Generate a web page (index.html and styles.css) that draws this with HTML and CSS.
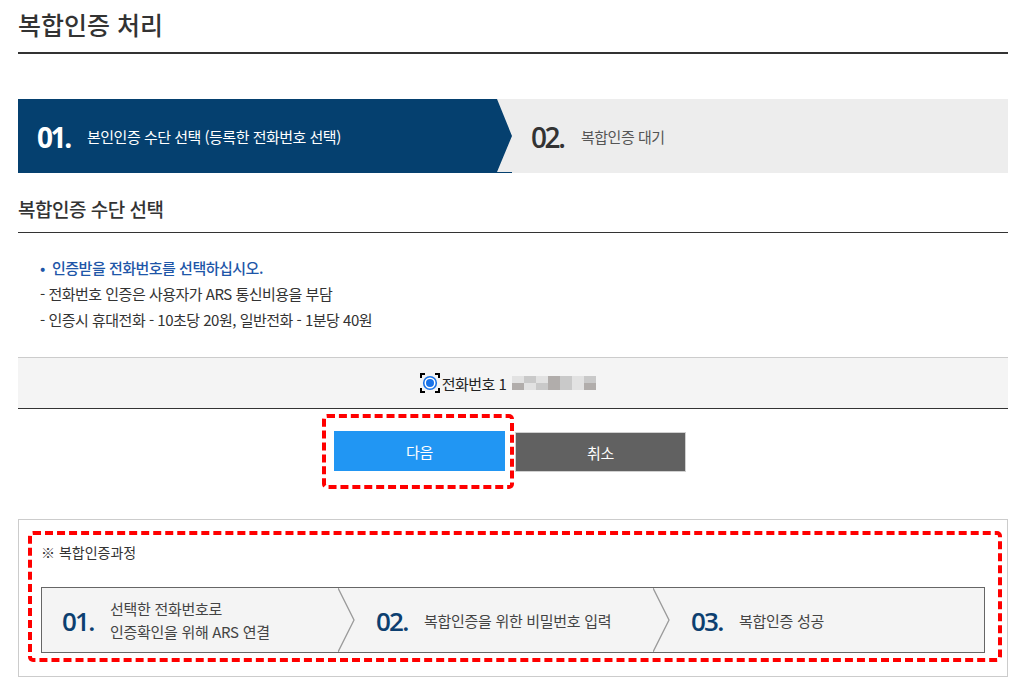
FILE: index.html
```html
<!DOCTYPE html>
<html lang="ko">
<head>
<meta charset="utf-8">
<title>복합인증 처리</title>
<link rel="stylesheet" href="styles.css">
</head>
<body>
<div class="page">
  <h1 class="title">복합인증 처리</h1>

  <div class="steps">
    <div class="step step-on"><span class="step-no">01.</span><span class="step-txt">본인인증 수단 선택 (등록한 전화번호 선택)</span></div>
    <div class="step step-off"><span class="step-no">02.</span><span class="step-txt">복합인증 대기</span></div>
  </div>

  <h2 class="sec">복합인증 수단 선택</h2>

  <ul class="info">
    <li class="info-main"><span class="dot">•</span>인증받을 전화번호를 선택하십시오.</li>
    <li>- 전화번호 인증은 사용자가 ARS 통신비용을 부담</li>
    <li>- 인증시 휴대전화 - 10초당 20원, 일반전화 - 1분당 40원</li>
  </ul>

  <div class="choice">
    <label class="choice-item">
      <svg class="radio" width="20" height="20" viewBox="0 0 20 20">
        <path d="M1 5V1H5M15 1H19V5M19 15V19H15M5 19H1V15" fill="none" stroke="#000" stroke-width="2"/>
        <circle cx="10" cy="10" r="6.3" fill="#fff" stroke="#1a73e8" stroke-width="1.6"/>
        <circle cx="10" cy="10" r="4" fill="#1a73e8"/>
      </svg>
      <span class="choice-txt">전화번호 1</span>
      <span class="mosaic"><i class="m1"></i><i class="m2"></i><i class="m1"></i><i class="m3"></i><i class="m2"></i><i class="m1"></i><i class="m2"></i><i class="m3"></i><i class="m1"></i><i class="m2"></i><i class="m3"></i><i class="m2"></i><i class="m1"></i><i class="m3"></i></span>
    </label>
  </div>

  <div class="btns">
    <span class="mark"><button class="btn btn-next">다음</button></span>
    <button class="btn btn-cancel">취소</button>
  </div>

  <div class="process">
    <p class="proc-label">※ 복합인증과정</p>
    <div class="proc-row">
      <div class="proc-item proc-1"><span class="proc-no">01.</span><span class="proc-txt">선택한 전화번호로<br>인증확인을 위해 ARS 연결</span></div>
      <svg class="chev" width="17" height="64" viewBox="0 0 17 64"><polyline points="0,0 16,32 0,64" fill="none" stroke="#9a9a9a" stroke-width="1.3"/></svg>
      <div class="proc-item proc-2"><span class="proc-no">02.</span><span class="proc-txt">복합인증을 위한 비밀번호 입력</span></div>
      <svg class="chev" width="17" height="64" viewBox="0 0 17 64"><polyline points="0,0 16,32 0,64" fill="none" stroke="#9a9a9a" stroke-width="1.3"/></svg>
      <div class="proc-item proc-3"><span class="proc-no">03.</span><span class="proc-txt">복합인증 성공</span></div>
    </div>
  </div>
</div>
</body>
</html>
```

FILE: styles.css
```css
* { box-sizing: border-box; }

body {
  margin: 0;
  font-family: "Noto Sans CJK KR", "Noto Sans", sans-serif;
  color: #333;
  background: #fff;
}

.page {
  padding: 0 18px;
}

.title {
  margin: 0;
  padding-top: 6px;
  padding-bottom: 10px;
  font-size: 25px;
  line-height: 36px;
  font-weight: 500;
  letter-spacing: 0;
  color: #333;
  border-bottom: 2px solid #333;
}

/* step bar */
.steps {
  display: flex;
  margin-top: 45px;
  height: 74px;
  background: #ededed;
}

.step {
  display: flex;
  align-items: center;
  height: 100%;
}

.step-on {
  width: 494px;
  flex: none;
  padding-left: 19px;
  background: #05406f;
  clip-path: polygon(0 0, calc(100% - 15px) 0, 100% 50%, calc(100% - 15px) calc(100% - 1px), 100% calc(100% - 1px), 100% 100%, 0 100%);
}

.step-off {
  padding-left: 19px;
}

.step-no {
  width: 50px;
  flex: none;
  font-family: "Open Sans", "Liberation Sans", sans-serif;
  font-size: 28px;
  font-weight: 700;
  letter-spacing: -2.4px;
  line-height: 1;
  padding-top: 2px;
}

.step-txt {
  font-size: 15px;
  letter-spacing: -0.5px;
}

.step-on .step-no,
.step-on .step-txt {
  color: #fff;
}

.step-off .step-no {
  color: #333;
  font-weight: 600;
}

.step-off .step-txt {
  color: #555;
}

/* section heading */
.sec {
  margin: 21px 0 0;
  padding-bottom: 8px;
  font-size: 19px;
  line-height: 30px;
  font-weight: 500;
  letter-spacing: -0.5px;
  color: #333;
  border-bottom: 1px solid #333;
}

.info {
  list-style: none;
  margin: 22px 0 0;
  padding: 0 0 0 22px;
  font-size: 15px;
  line-height: 26px;
  letter-spacing: -0.5px;
  color: #333;
}

.info-main {
  color: #1e56a8;
  font-weight: 500;
}

.dot {
  display: inline-block;
  width: 12px;
  letter-spacing: 0;
}

/* choice row */
.choice {
  margin-top: 24px;
  height: 52px;
  background: #f4f4f4;
  border-top: 1px solid #ccc;
  border-bottom: 1px solid #333;
  display: flex;
  align-items: center;
  justify-content: center;
}

.choice-item {
  display: flex;
  align-items: center;
  margin-right: 10px;
}

.radio {
  display: block;
  margin-right: 2px;
}

.choice-txt {
  font-size: 15px;
  color: #222;
  letter-spacing: -0.5px;
}

.mosaic {
  display: grid;
  grid-template-columns: repeat(7, 12px);
  grid-template-rows: 7px 7px;
  margin-left: 6px;
  filter: blur(0.6px);
}

.mosaic i { display: block; }
.mosaic .m1 { background: #e2e2e2; }
.mosaic .m2 { background: #c9c9c9; }
.mosaic .m3 { background: #b1adab; }

/* buttons */
.btns {
  display: flex;
  justify-content: center;
  gap: 10px;
  margin-top: 22px;
  padding-right: 6px;
}

.mark {
  position: relative;
  display: block;
}

.mark::after {
  content: "";
  position: absolute;
  left: -12px;
  right: -9px;
  top: -17px;
  bottom: -17px;
  border: 4px dashed #ff0000;
  border-radius: 5px;
  pointer-events: none;
}

.btn {
  display: block;
  width: 171px;
  height: 40px;
  border: 0;
  font-family: inherit;
  font-size: 15px;
  color: #fff;
  letter-spacing: -0.3px;
  padding: 0;
}

.btn-next {
  background: #2196f3;
}

.btn-cancel {
  background: #616161;
  border: 1px solid #d0d0d0;
  margin-top: 1px;
}

/* process */
.process {
  position: relative;
  margin-top: 47px;
  border: 1px solid #ccc;
  padding: 22px 22px 23px 22px;
}

.process::before {
  content: "";
  position: absolute;
  left: 9px;
  top: 11px;
  right: 5px;
  bottom: 14px;
  border: 4px dashed #ff0000;
  border-radius: 5px;
  pointer-events: none;
}

.proc-label {
  margin: 0;
  font-size: 14px;
  line-height: 20px;
  letter-spacing: 0;
  color: #333;
}

.proc-row {
  display: flex;
  margin-top: 25px;
  height: 66px;
  border: 1px solid #666;
  background: #f4f4f4;
}

.chev {
  display: block;
  flex: none;
}

.proc-item {
  display: flex;
  align-items: center;
  padding-left: 21px;
}

.proc-1 { width: 296px; padding-left: 20px; }
.proc-2 { width: 298px; }
.proc-3 { flex: 1; }

.proc-no {
  width: 48px;
  flex: none;
  font-family: "Open Sans", "Liberation Sans", sans-serif;
  font-size: 26px;
  font-weight: 600;
  letter-spacing: -1.8px;
  color: #0c3f70;
  line-height: 1;
  padding-top: 2px;
}

.proc-txt {
  font-size: 15px;
  line-height: 23px;
  letter-spacing: -0.3px;
  color: #444;
}
```
